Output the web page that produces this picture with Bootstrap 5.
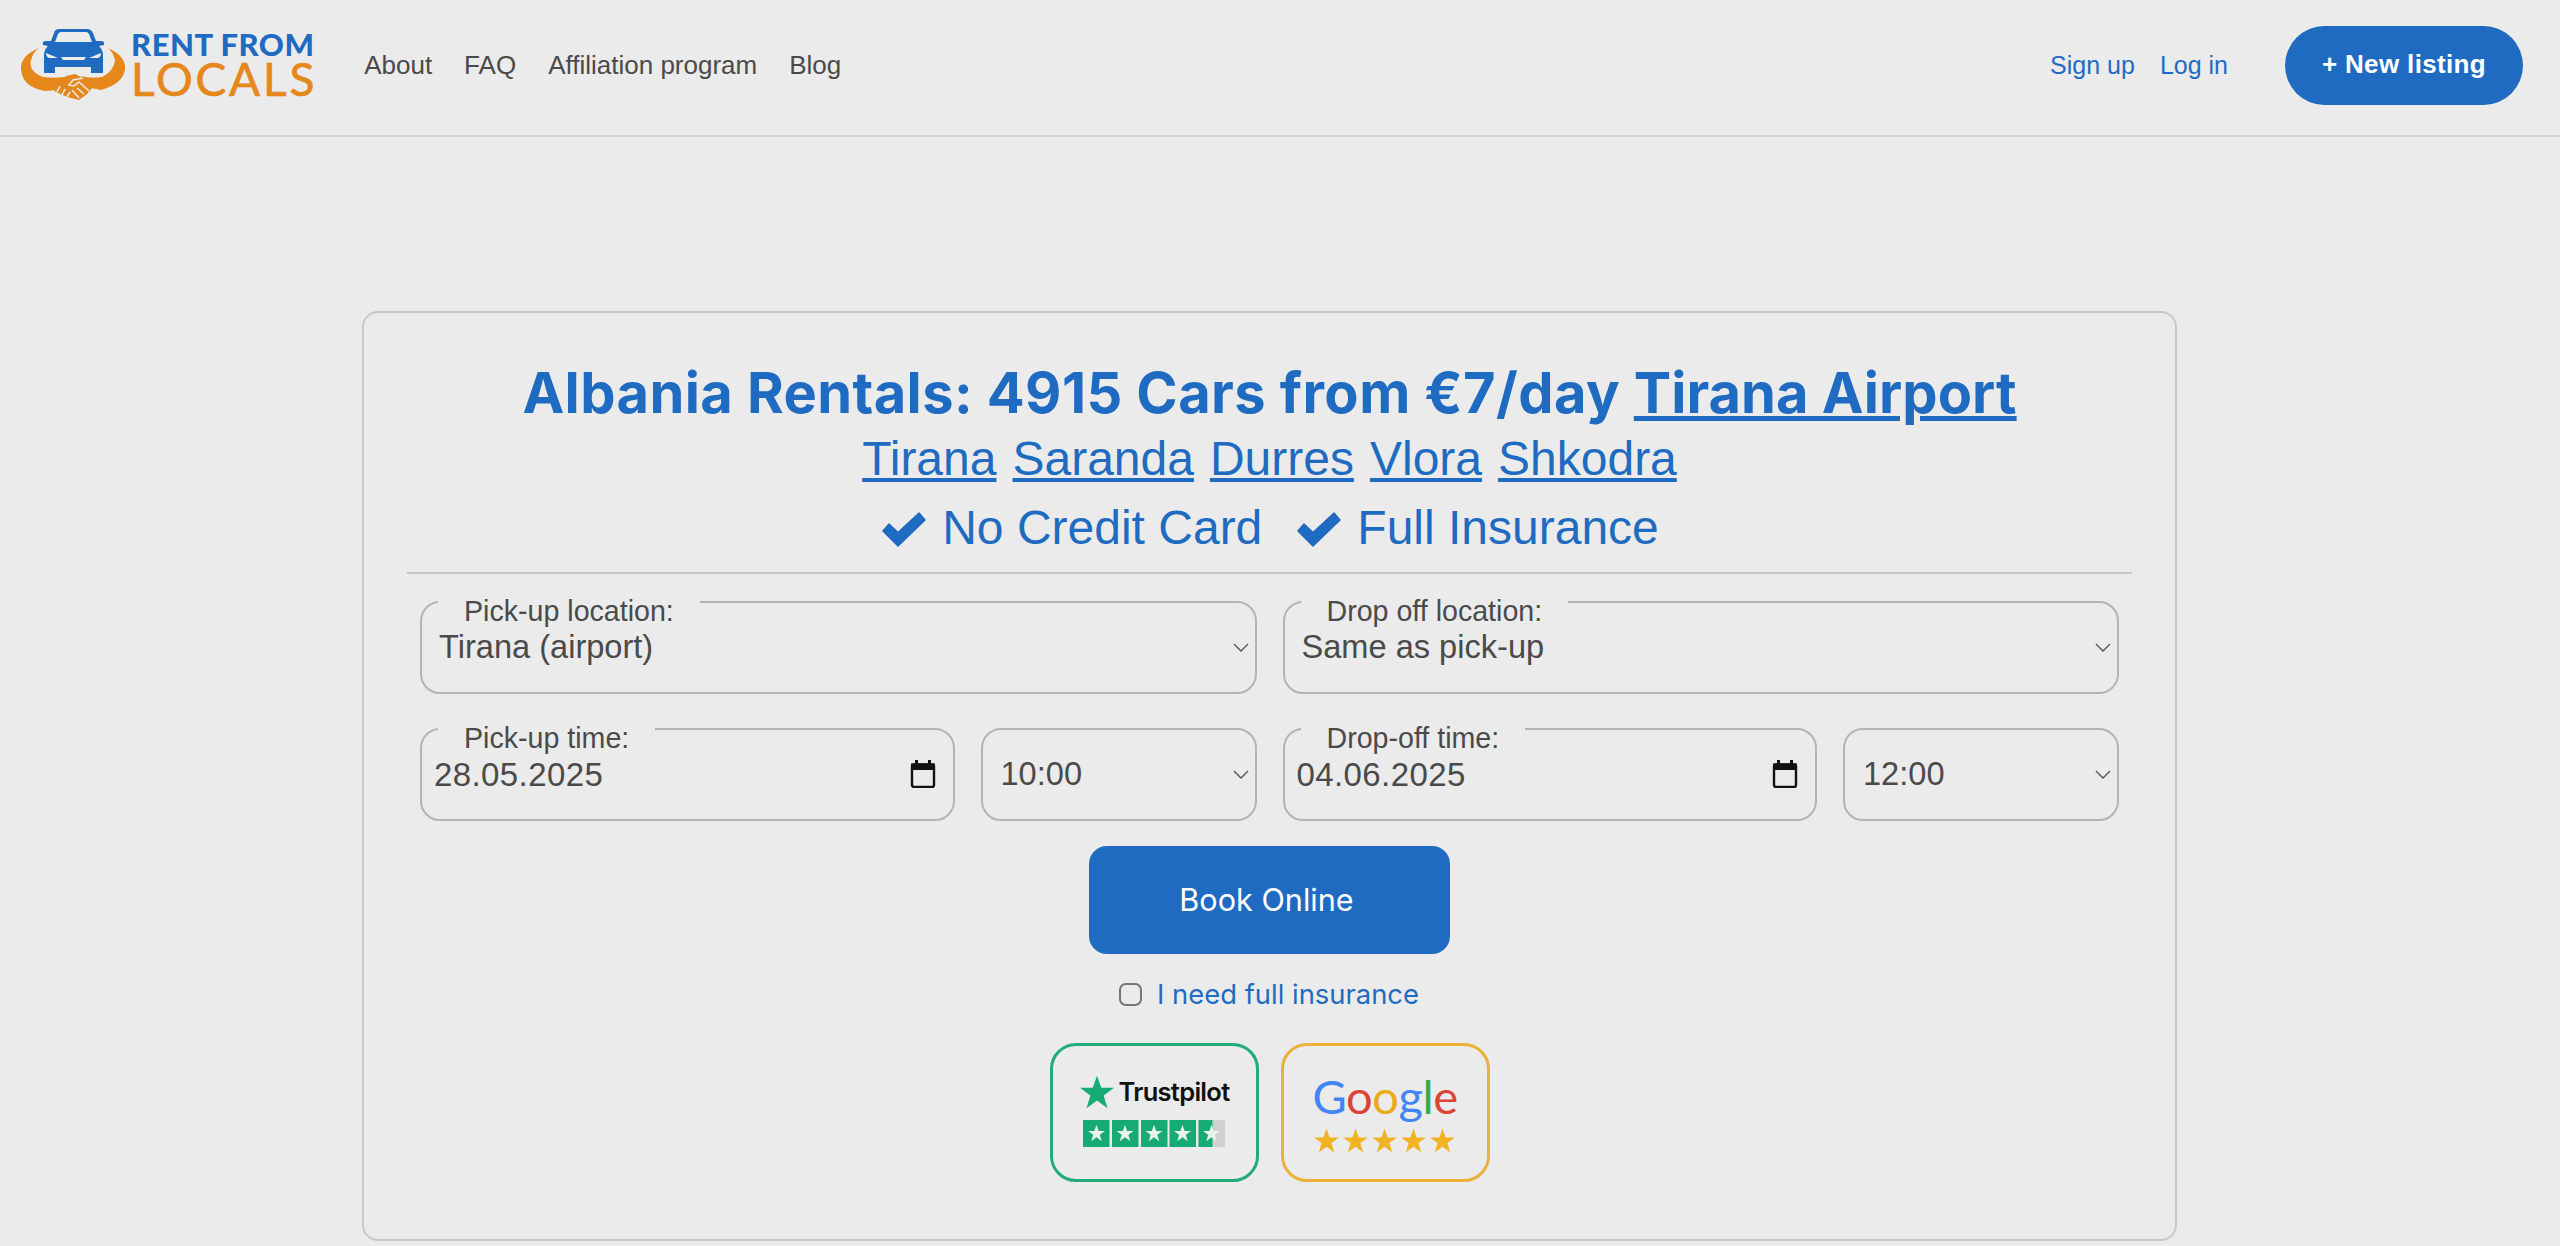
<!DOCTYPE html>
<html lang="en">
<head>
<meta charset="utf-8">
<title>Rent From Locals</title>
<link href="https://cdn.jsdelivr.net/npm/bootstrap@5.3.0/dist/css/bootstrap.min.css" rel="stylesheet">
<style>
body{background:#ebebeb;font-family:"Liberation Sans",Arial,sans-serif;color:#4a4a4a;overflow:hidden}
.topbar{height:137px;border-bottom:2px solid #d2d2d2;padding:0 37px 4px 20px}
.brand-link{text-decoration:none;gap:0}
.brand-words{margin-left:-4px;font-family:Lato,"Liberation Sans",sans-serif}
.word-top{font-size:31px;font-weight:900;line-height:27px;color:#1f6bc1;letter-spacing:.5px;white-space:nowrap}
.word-low{font-size:46px;line-height:42px;color:#e5871b;letter-spacing:2.8px;-webkit-text-stroke:.7px #e5871b;white-space:nowrap}
.menu-links{margin-left:47px;gap:32px;font-size:26px}
.menu-links a{color:#4a4a4a;text-decoration:none}
.auth-links{gap:25px;font-size:25px;margin-right:57px}
.auth-links a{color:#1f6bc1;text-decoration:none}
.new-btn{background:#1f6bc1;color:#fff;border-radius:40px;width:238px;height:79px;font-size:26px;font-weight:700;letter-spacing:.35px;text-decoration:none;padding-bottom:2px}
.panel{width:1815px;margin:174px 0 0 362px;border:2px solid #c8c8c8;border-radius:16px;padding:49px 43px 57px;color:#1f6bc1}
.headline{font:700 56px/62px Inter,"Liberation Sans",sans-serif;letter-spacing:.42px;margin:0}
.headline a{letter-spacing:.05px}
.headline a,.cities a{color:#1f6bc1}
.cities{font-size:48px;line-height:58px;margin-top:6px;gap:16px}
.perks{font-size:48px;line-height:58px;margin-top:11px;gap:35px;padding-left:2px}
.perks svg{margin-right:16px;margin-top:2px}
.rule{height:2px;background:#c8c8c8;margin-top:15px}
.fields{padding:0 13px;margin-top:27px}
.field-stack{gap:34px}
.field-row{gap:26px}
.field-half{flex:1 1 0;gap:26px;min-width:0}
.field-box{position:relative;flex:1 1 0;min-width:0}
.field-box label{position:absolute;left:18px;top:-3px;padding:0 26px;height:26px;font-size:28.6px;line-height:26px;background:#ebebeb;color:#4a4a4a;white-space:nowrap;z-index:1}
.field-box .form-select,.field-box .form-control{height:93px;background-color:transparent;border:2px solid #b4b4b4;border-radius:20px;font-size:32.6px;color:#4a4a4a;box-shadow:none}
.field-box .form-select{padding:0 40px 0 17px;background-size:16px 9px;background-position:right 6px center;background-image:url("data:image/svg+xml,%3csvg xmlns='http://www.w3.org/2000/svg' viewBox='0 0 16 9'%3e%3cpath fill='none' stroke='%23555' stroke-width='1.4' d='M1 1l7 7 7-7'/%3e%3c/svg%3e")}
.field-box .form-control{padding:0 60px 0 12px;font-size:33px;letter-spacing:.4px}
.time-box{flex:0 0 276px}
.time-box .form-select{padding-left:18px}
.cal-icon{position:absolute;right:19px;top:32px;pointer-events:none}
.book-btn{width:361px;height:108px;background:#1f6bc1;border:0;border-radius:18px;color:#fff;font:400 30.6px Inter,"Liberation Sans",sans-serif;margin-top:25px;padding:0 6px 2px 0}
.book-btn:hover{background:#1f6bc1;color:#fff}
.insure{margin-top:25px;height:30px;gap:15px;font:400 27.4px/30px Inter,"Liberation Sans",sans-serif;color:#1f6bc1;margin-left:-1px}
.insure input{width:23px;height:23px;margin:0;background:transparent;border:2px solid #767676;border-radius:3px}
.proof{margin-top:34px;gap:22px}
.proof-box{width:209px;height:139px;border-radius:26px;border:3px solid}
.proof-tp{border-color:#22ac78}
.proof-gg{border-color:#ebb13a}
.tp-name{font:600 25.5px/32px Inter,"Liberation Sans",sans-serif;color:#111;letter-spacing:-.7px}
.gg-name{font:400 47px/46px Lato,"Open Sans",sans-serif;letter-spacing:-.4px}
.tp-head{margin-top:-4px}
.tp-bar{margin-top:11px}
.gg-bar{margin-top:9px}
</style>
</head>
<body>
<svg width="0" height="0" class="position-absolute"><defs><symbol id="st" viewBox="0 0 24 24"><polygon points="12 .5 15 9 24 9 16.7 14.5 19.4 23.5 12 18 4.6 23.5 7.3 14.5 0 9 9 9"/></symbol></defs></svg>
<nav class="topbar d-flex align-items-center">
  <a href="#" class="brand-link d-flex align-items-center">
    <svg width="115" height="80" viewBox="19 26 115 80">
      <path fill="#e5871b" d="M38 48Q19 56 20 69Q21 87 44 91L56 90L70 76Q55 79 42 77Q27 71 30 60Q32 52 38 48Z"/>
      <path fill="#e5871b" d="M107 48Q125 56 124 69Q122 84 100 90L90 88L80 76Q90 79 101 77Q113 71 114 60Q112 52 107 48Z"/>
      <path fill="#1f6bc1" d="M58 29H86Q90 29 92 33L95 41H100Q104 41 103 45L98 46Q102 50 102 55V73H90V67H54V73H43V55Q43 50 47 46L42 45Q41 41 45 41H50L53 33Q54 29 58 29Z"/>
      <path fill="#ebebeb" d="M60 32H85Q87 32 88 34L91 42H54L57 34Q58 32 60 32Z"/>
      <path fill="#ebebeb" d="M45 53L57 58H48Q45 57 45 53ZM100 53L88 58H97Q100 57 100 53ZM60 57H85L83 60H62Z"/>
      <path fill="#e5871b" d="M65 76L74 74L82 78L92 87L86 94L78 100L66 97L53 91L60 84Z"/>
      <path fill="none" stroke="#ebebeb" stroke-width="1.6" d="M82 78L72 80L68 85L73 86L78 82L88 91M83 94L76 88M78 98L71 90M59 86L56 92M64 89L61 95M69 92L66 97"/>
    </svg>
    <span class="brand-words d-flex flex-column">
      <span class="word-top">RENT FROM</span>
      <span class="word-low">LOCALS</span>
    </span>
  </a>
  <div class="menu-links d-flex">
    <a href="#">About</a><a href="#">FAQ</a><a href="#">Affiliation program</a><a href="#">Blog</a>
  </div>
  <div class="auth-links d-flex ms-auto"><a href="#">Sign up</a><a href="#">Log in</a></div>
  <a href="#" class="new-btn d-flex align-items-center justify-content-center">+ New listing</a>
</nav>

<main class="panel">
  <h1 class="headline text-center">Albania Rentals: 4915 Cars from €7/day <a href="#">Tirana Airport</a></h1>
  <div class="cities d-flex justify-content-center">
    <a href="#">Tirana</a><a href="#">Saranda</a><a href="#">Durres</a><a href="#">Vlora</a><a href="#">Shkodra</a>
  </div>
  <div class="perks d-flex justify-content-center">
    <span class="d-flex align-items-center"><svg width="44" height="35" viewBox="0 0 44 35"><path fill="#1f6bc1" stroke="#1f6bc1" stroke-width="1.5" stroke-linejoin="round" d="M1 19L7 12L16 20.5L37 1L43 8L16 34Z"/></svg>No Credit Card</span>
    <span class="d-flex align-items-center"><svg width="44" height="35" viewBox="0 0 44 35"><path fill="#1f6bc1" stroke="#1f6bc1" stroke-width="1.5" stroke-linejoin="round" d="M1 19L7 12L16 20.5L37 1L43 8L16 34Z"/></svg>Full Insurance</span>
  </div>
  <div class="rule"></div>
  <form class="fields">
    <div class="field-stack d-flex flex-column">
      <div class="field-row d-flex">
        <div class="field-box">
          <label>Pick-up location:</label>
          <select class="form-select"><option>Tirana (airport)</option></select>
        </div>
        <div class="field-box">
          <label>Drop off location:</label>
          <select class="form-select"><option>Same as pick-up</option></select>
        </div>
      </div>
      <div class="field-row d-flex">
        <div class="field-half d-flex">
          <div class="field-box">
            <label>Pick-up time:</label>
            <input class="form-control" type="text" value="28.05.2025">
            <svg class="cal-icon" width="26" height="28" viewBox="0 0 26 28"><path fill="none" stroke="#111" stroke-width="2.4" d="M2 6.5Q2 4.5 4 4.5H22Q24 4.5 24 6.5V25Q24 27 22 27H4Q2 27 2 25Z"/><path fill="#111" d="M1 3.5H25V10H1ZM5 0H8V4H5ZM18 0H21V4H18Z"/></svg>
          </div>
          <div class="field-box time-box">
            <select class="form-select"><option>10:00</option></select>
          </div>
        </div>
        <div class="field-half d-flex">
          <div class="field-box">
            <label>Drop-off time:</label>
            <input class="form-control" type="text" value="04.06.2025">
            <svg class="cal-icon" width="26" height="28" viewBox="0 0 26 28"><path fill="none" stroke="#111" stroke-width="2.4" d="M2 6.5Q2 4.5 4 4.5H22Q24 4.5 24 6.5V25Q24 27 22 27H4Q2 27 2 25Z"/><path fill="#111" d="M1 3.5H25V10H1ZM5 0H8V4H5ZM18 0H21V4H18Z"/></svg>
          </div>
          <div class="field-box time-box">
            <select class="form-select"><option>12:00</option></select>
          </div>
        </div>
      </div>
    </div>
    <div class="d-flex flex-column align-items-center">
      <button type="button" class="btn book-btn">Book Online</button>
      <label class="insure d-flex align-items-center"><input type="checkbox" class="form-check-input">I need full insurance</label>
      <div class="proof d-flex">
        <div class="proof-box proof-tp d-flex flex-column align-items-center justify-content-center">
          <div class="tp-head d-flex align-items-center gap-1">
            <svg width="36" height="34" viewBox="0 0 24 24" fill="#16ab72"><use href="#st"/></svg>
            <span class="tp-name">Trustpilot</span>
          </div>
          <svg width="142" height="27" viewBox="0 0 142 27" class="tp-bar">
            <rect x="0" width="26.5" height="27" fill="#16ab72"/><rect x="29" width="26.5" height="27" fill="#16ab72"/><rect x="58" width="26.5" height="27" fill="#16ab72"/><rect x="86.5" width="26.5" height="27" fill="#16ab72"/><rect x="115.5" width="26.5" height="27" fill="#cfd0d4"/><rect x="115.5" width="14" height="27" fill="#16ab72"/>
            <g fill="#ebf3ee"><use href="#st" x="5" y="4.5" width="17" height="17"/><use href="#st" x="33.500" y="4.5" width="17" height="17"/><use href="#st" x="62.500" y="4.5" width="17" height="17"/><use href="#st" x="91" y="4.5" width="17" height="17"/><use href="#st" x="120" y="4.5" width="17" height="17"/></g>
          </svg>
        </div>
        <div class="proof-box proof-gg d-flex flex-column align-items-center justify-content-center">
          <div class="gg-name"><span style="color:#4285f4">G</span><span style="color:#db4437">o</span><span style="color:#e9ab17">o</span><span style="color:#4285f4">g</span><span style="color:#34a853">l</span><span style="color:#db4437">e</span></div>
          <svg width="142" height="25" viewBox="0 0 142 25" fill="#f0b323" class="gg-bar">
            <use href="#st" x="0" width="25" height="25"/><use href="#st" x="29" width="25" height="25"/><use href="#st" x="58" width="25" height="25"/><use href="#st" x="87" width="25" height="25"/><use href="#st" x="116" width="25" height="25"/>
          </svg>
        </div>
      </div>
    </div>
  </form>
</main>
<script src="https://cdn.jsdelivr.net/npm/bootstrap@5.3.0/dist/js/bootstrap.bundle.min.js"></script>
</body>
</html>
